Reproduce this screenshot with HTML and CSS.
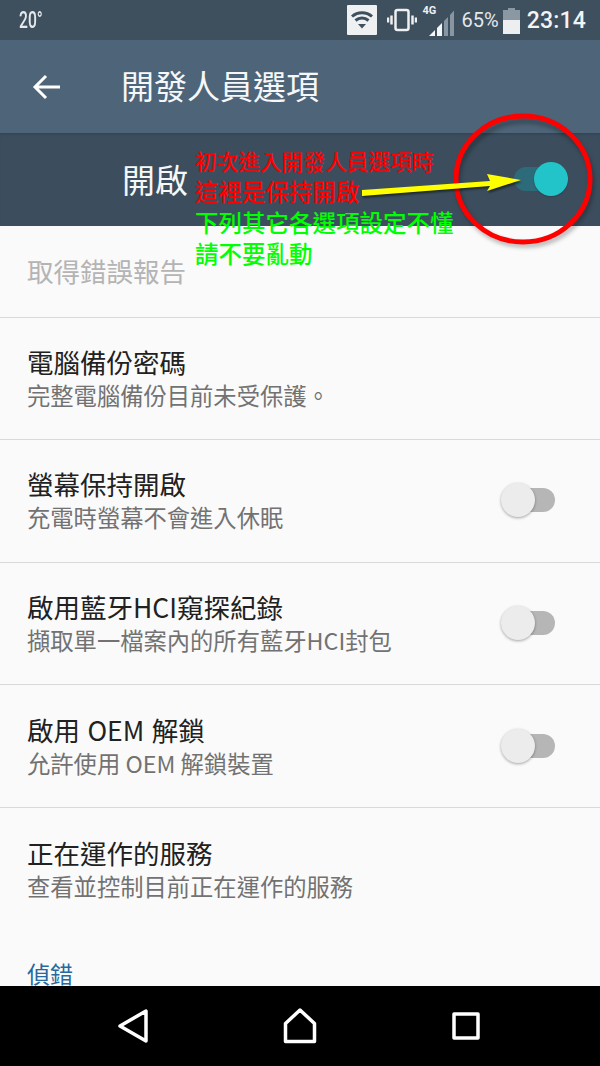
FILE: index.html
```html
<!DOCTYPE html>
<html lang="zh-Hant">
<head>
<meta charset="utf-8">
<title>開發人員選項</title>
<link rel="stylesheet" href="styles.css">
</head>
<body>
<div class="screen">
  <header class="status">
    <span class="temp">20°</span>
    <span class="status-right">
      <span class="wifi-box">
        <svg width="30" height="30" viewBox="0 0 30 30"><path d="M5 11.500a15 15 0 0 1 20 0" class="wifi-arc"/><path d="M8.500 15.500a10 10 0 0 1 13 0" class="wifi-arc"/><path d="M11 19h8l-4 4.500z" class="wifi-fill"/></svg>
      </span>
      <svg class="vib" width="30" height="24" viewBox="0 0 30 24"><rect x="8.500" y="2" width="13" height="20" rx="2" class="line"/><path d="M4.500 7.500v9M1 9.500v5M25.500 7.500v9M29 9.500v5" class="line"/></svg>
      <span class="signal">
        <span class="net">4G</span>
        <svg width="26" height="30" viewBox="0 0 26 30"><path d="M1 28l6-6v6z" class="s-on"/><path d="M9 28v-8l5-5v13z" class="s-on"/><path d="M16 28V13l4-4v19z" class="s-off"/><path d="M22 28V7l4-4.500V28z" class="s-off"/></svg>
      </span>
      <span class="pct">65%</span>
      <svg class="batt" width="17" height="26" viewBox="0 0 17 26"><path d="M5 0h7v2h5v10H0V2h5z" class="b-off"/><rect y="12" width="17" height="14" class="b-on"/></svg>
      <span class="clock">23:14</span>
    </span>
  </header>
  <div class="appbar">
    <svg class="back" width="30" height="30" viewBox="0 0 30 30"><path d="M28 15H3M14 4L3 15l11 11" class="back-line"/></svg>
    <h1 class="title">開發人員選項</h1>
  </div>
  <div class="master">
    <span class="master-label">開啟</span>
    <span class="toggle on"><span class="track"></span><span class="thumb"></span></span>
  </div>
  <main class="list">
    <div class="row row-first"><div class="row-text"><div class="row-title disabled">取得錯誤報告</div></div></div>
    <div class="row"><div class="row-text"><div class="row-title">電腦備份密碼</div><div class="row-sub">完整電腦備份目前未受保護。</div></div></div>
    <div class="row"><div class="row-text"><div class="row-title">螢幕保持開啟</div><div class="row-sub">充電時螢幕不會進入休眠</div></div><span class="toggle"><span class="track"></span><span class="thumb"></span></span></div>
    <div class="row"><div class="row-text"><div class="row-title">啟用藍牙HCI窺探紀錄</div><div class="row-sub">擷取單一檔案內的所有藍牙HCI封包</div></div><span class="toggle"><span class="track"></span><span class="thumb"></span></span></div>
    <div class="row"><div class="row-text"><div class="row-title">啟用 OEM 解鎖</div><div class="row-sub">允許使用 OEM 解鎖裝置</div></div><span class="toggle"><span class="track"></span><span class="thumb"></span></span></div>
    <div class="row row-plain"><div class="row-text"><div class="row-title">正在運作的服務</div><div class="row-sub">查看並控制目前正在運作的服務</div></div></div>
    <div class="section">偵錯</div>
  </main>
  <nav class="navbar">
    <svg width="34" height="36" viewBox="0 0 34 36"><path d="M3 18L29 3v30z" class="nav-line"/></svg>
    <svg width="34" height="36" viewBox="0 0 34 36"><path d="M2.500 33.500V15.500L17 2l14.500 13.500v18z" class="nav-line"/></svg>
    <svg width="34" height="36" viewBox="0 0 34 36"><rect x="5" y="6" width="24" height="24" class="nav-line"/></svg>
  </nav>
  <div class="note">
    <div class="note-line note-red note-small">初次進入開發人員選項時</div>
    <div class="note-line note-red">這裡是保持開啟</div>
    <div class="note-line note-green">下列其它各選項設定不懂</div>
    <div class="note-line note-green">請不要亂動</div>
  </div>
  <svg class="markup" width="600" height="300" viewBox="0 0 600 300">
    <ellipse cx="525" cy="183" rx="67" ry="62" class="ring-shadow"/>
    <ellipse cx="523" cy="179" rx="67" ry="63" class="ring"/>
    <path d="M362 190L490 181L487 174L521 180L487 191L490 186L362 196z" class="arrow-shadow"/>
    <path d="M362 190L490 181L487 174L521 180L487 191L490 186L362 196z" class="arrow"/>
  </svg>
</div>
</body>
</html>
```
FILE: styles.css
```css
* { box-sizing: border-box; }
html, body { margin: 0; padding: 0; }
body { font-family: "Noto Sans CJK TC", Roboto, sans-serif; background: #fafafa; }
.screen { position: relative; width: 600px; height: 1066px; overflow: hidden; display: flex; flex-direction: column; }

.status { height: 40px; flex: none; background: #3e4f5e; color: #f0f2f3; display: flex; align-items: center; justify-content: space-between; padding: 0 14px 0 19px; }
.temp { font-family: "Roboto", sans-serif; font-size: 23px; font-weight: 500; transform: scaleX(.68); transform-origin: left center; color: #e6e9eb; }
.status-right { display: flex; align-items: center; }
.wifi-box { width: 30px; height: 30px; margin-right: 10px; background: #eef0f1; border-radius: 1px; display: block; }
.wifi-box svg { display: block; }
.wifi-arc { fill: none; stroke: #3e4f5e; stroke-width: 3; }
.wifi-fill { fill: #3e4f5e; }
.vib { margin-right: 7px; }
.line { fill: none; stroke: #eef0f1; stroke-width: 2.500; }
.signal { position: relative; display: block; width: 30px; height: 32px; margin-right: 8px; }
.signal svg { position: absolute; right: 0; bottom: -2px; }
.net { position: absolute; left: -1px; top: 1px; font-family: "Roboto", sans-serif; font-size: 11px; font-weight: 700; line-height: 12px; color: #eef0f1; }
.s-on { fill: #f4f5f6; }
.s-off { fill: #8796a2; }
.pct { font-family: "Roboto", sans-serif; font-size: 20px; color: #e4e8ea; margin-right: 4px; }
.batt { margin-right: 7px; margin-top: 2px; }
.b-off { fill: #8a98a3; }
.b-on { fill: #eceeef; }
.clock { font-family: "Roboto", sans-serif; font-size: 23px; font-weight: 500; color: #f2f4f5; letter-spacing: .2px; }

.appbar { height: 93px; flex: none; background: #4e6478; display: flex; align-items: center; padding: 0 0 3px 32px; }
.back { margin-right: 59px; margin-top: 3px; }
.back-line { fill: none; stroke: #fff; stroke-width: 3; }
.title { margin: 0; font-size: 33px; font-weight: 400; color: #f5f7f8; line-height: 40px; }

.master { height: 93px; flex: none; background: #3c4e5e; display: flex; align-items: center; justify-content: space-between; padding: 0 32px 0 122px; box-shadow: inset 0 3px 3px -2px rgba(30,40,50,.35); }
.master-label { font-size: 33px; color: #f5f7f8; line-height: 40px; margin-top: -2px; }

.toggle { position: relative; flex: none; display: block; width: 54px; height: 34px; margin-top: -1px; }
.track { position: absolute; right: 0; top: 5px; width: 36px; height: 24px; border-radius: 0 12px 12px 0; background: #b6b6b6; }
.thumb { position: absolute; left: 0; top: 0; width: 34px; height: 34px; border-radius: 50%; background: #ececec; box-shadow: 0 1px 3px rgba(0,0,0,.35); }
.toggle.on { margin-top: -2px; }
.toggle.on .track { left: 0; right: auto; width: 50px; border-radius: 12px; background: #2d6b7a; }
.toggle.on .thumb { left: auto; right: 0; background: #23c4c9; box-shadow: 0 1px 2px rgba(0,0,0,.2); }

.list { flex: 1; min-height: 0; overflow: hidden; background: #fafafa; }
.row { height: 122.600px; display: flex; align-items: center; justify-content: space-between; padding: 0 45px 0 27px; border-bottom: 1px solid #d9d9d9; }
.row-first { height: 91.500px; }
.row-plain { border-bottom: 0; }
.row-text { display: flex; flex-direction: column; gap: 0; }
.row-title { font-size: 26.500px; line-height: 34px; color: #212121; white-space: nowrap; word-spacing: 1.500px; }
.row-title.disabled { color: #b4b4b4; }
.row-sub { font-size: 23.300px; line-height: 33px; color: #727272; white-space: nowrap; }
.section { font-size: 23px; line-height: 24px; color: #27689e; padding: 0 27px; margin-top: 31px; }

.navbar { height: 80px; flex: none; background: #000; display: grid; grid-template-columns: repeat(3, 34px); justify-content: space-between; align-items: center; padding: 0 117px; }
.nav-line { fill: none; stroke: #fff; stroke-width: 3.500; stroke-linejoin: round; }

.note { position: absolute; left: 195px; top: 145px; display: flex; flex-direction: column; font-weight: 500; white-space: nowrap; }
.note-line { font-size: 23.500px; line-height: 31px; }
.note-small { font-size: 21.700px; }
.note-red { color: #f00; }
.note-green { color: #0f0; }
.markup { position: absolute; left: 0; top: 0; pointer-events: none; }
.ring { fill: none; stroke: #f00; stroke-width: 5; }
.ring-shadow { fill: none; stroke: rgba(0,0,0,.28); stroke-width: 5; filter: blur(2px); }
.arrow { fill: #ff0; }
.arrow-shadow { fill: rgba(0,0,0,.5); transform: translate(1px, 2px); filter: blur(1px); }
```
